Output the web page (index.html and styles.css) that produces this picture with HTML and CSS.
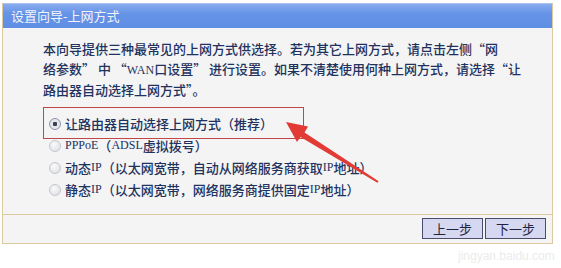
FILE: index.html
```html
<!DOCTYPE html>
<html lang="zh-CN">
<head>
    <meta charset="UTF-8">
    <meta name="viewport" content="width=device-width, initial-scale=1.0">
    <title>设置向导-上网方式</title>
    <link rel="stylesheet" href="styles.css">
</head>
<body>
    <div class="wizard">
        <div class="wizard-title">设置向导-上网方式</div>
        <div class="wizard-body">
            <p class="intro">本向导提供三种最常见的上网方式供选择。若为其它上网方式，请点击左侧“网<br>络参数” 中 “<span class="latin">WAN</span>口设置” 进行设置。如果不清楚使用何种上网方式，请选择“让<br>路由器自动选择上网方式”。</p>
            <form class="options">
                <label class="option"><input type="radio" name="wan" checked>让路由器自动选择上网方式（推荐）</label>
                <label class="option"><input type="radio" name="wan"><span class="latin">PPPoE</span>（<span class="latin">ADSL</span>虚拟拨号）</label>
                <label class="option"><input type="radio" name="wan">动态<span class="latin">IP</span>（以太网宽带，自动从网络服务商获取<span class="latin">IP</span>地址）</label>
                <label class="option"><input type="radio" name="wan">静态<span class="latin">IP</span>（以太网宽带，网络服务商提供固定<span class="latin">IP</span>地址）</label>
            </form>
        </div>
        <div class="wizard-footer">
            <button type="button">上一步</button>
            <button type="button">下一步</button>
        </div>
        <!-- annotation drawn over the screenshot -->
        <div class="mark-box"></div>
        <svg class="mark-arrow" width="561" height="268" viewBox="0 0 561 268">
            <polygon points="286,122 308,126.5 304.5,132.5 378.6,181.2 377.4,182.8 300.5,137 297,142" fill="#e23a35"/>
        </svg>
    </div>
    <div class="watermark">jingyan.baidu.com</div>
</body>
</html>
```

FILE: styles.css
```css
body {
    margin: 0;
    padding: 3px 0 0 2px;
    background-color: #fff;
    font-family: "Noto Sans CJK SC", "Liberation Sans", sans-serif;
    font-size: 13px;
    color: #22325e;
}
.wizard {
    width: 549px;
    border: 1px solid #dcc9a0;
    border-top: none;
    background-color: #f4f4f4;
}
.wizard-title {
    height: 24px;
    line-height: 24px;
    padding-left: 8px;
    background: linear-gradient(#88acee, #6593e6 40%, #5f8fe4);
    border-top: 1px solid #a9c4f2;
    color: #f2f4fa;
    font-size: 13px;
}
.wizard-body {
    padding: 11px 0 13px 40px;
    border-bottom: 1px solid #dcc9a0;
}
.intro {
    margin: 0;
    line-height: 19.5px;
    font-weight: 500;
}
.latin {
    font-family: "Liberation Serif", serif;
    font-size: 12px;
}
.options {
    display: flex;
    flex-direction: column;
    margin-top: 13px;
    font-weight: 500;
}
.option {
    display: flex;
    align-items: center;
    height: 22px;
}
.option input {
    appearance: none;
    width: 12px;
    height: 12px;
    margin: 0 4px 0 6px;
    border: 1px solid #c2c6d0;
    border-radius: 50%;
    background: radial-gradient(circle at 40% 35%, #fafafa, #dcdde2);
}
.option input:checked {
    border-color: #8e94a6;
    background: radial-gradient(circle, #3c4050 0 2px, #e6e7ec 2.5px);
}
.wizard-footer {
    height: 28px;
    display: flex;
    justify-content: flex-end;
    align-items: center;
    gap: 2px;
    padding-right: 6px;
}
button {
    width: 61px;
    height: 21px;
    padding: 0;
    border: 1px solid #4a4c6c;
    background-color: #d6d8f2;
    font-family: "Noto Sans CJK SC", sans-serif;
    font-size: 13px;
    color: #1e2440;
}
.mark-box {
    position: absolute;
    left: 43px;
    top: 107px;
    width: 259px;
    height: 30px;
    border: 1.5px solid #c0464a;
}
.mark-arrow {
    position: absolute;
    left: 0;
    top: 0;
}
.watermark {
    margin: 5px 0 0 456px;
    font-size: 12px;
    color: #ececec;
    font-family: "Liberation Sans", sans-serif;
}
```
